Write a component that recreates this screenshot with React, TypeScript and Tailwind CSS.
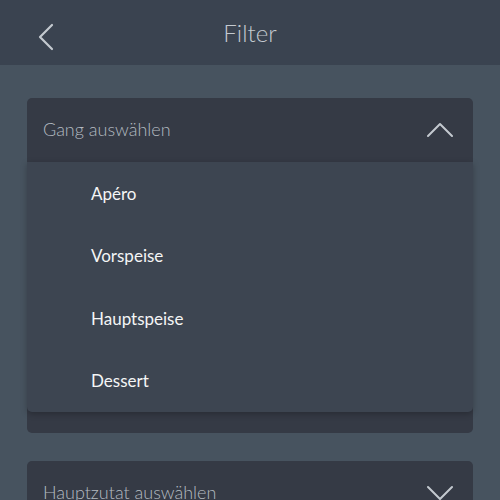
export default function App() {
  const items = ["Apéro", "Vorspeise", "Hauptspeise", "Dessert"];
  return (
    <div className="w-[500px] h-[500px] overflow-hidden bg-[#47535f]" style={{ fontFamily: "Lato, 'Noto Sans', sans-serif" }}>
      <div className="h-[65px] bg-[#3a4350] relative flex items-center justify-center">
        <svg className="absolute left-[37px] top-[23px]" width="18" height="28" viewBox="0 0 18 28" fill="none">
          <path d="M15 2 L3 14 L15 26" stroke="#c3c9cf" strokeWidth="2.2" strokeLinecap="round" strokeLinejoin="round" />
        </svg>
        <span className="text-[24px] text-[#c3c9cf] font-light">Filter</span>
      </div>
      <div className="px-[27px] pt-[33px] flex flex-col gap-[28px]">
        <div className="rounded-[5px] bg-[#353a45] relative h-[335px] shrink-0">
          <div className="h-[63px] flex items-center justify-between pl-[16px] pr-[20px]">
            <span className="text-[18px] text-[#b4bac1] font-light">Gang auswählen</span>
            <svg width="26" height="16" viewBox="0 0 26 16" fill="none">
              <path d="M1 14 L13 2 L25 14" stroke="#c3c9cf" strokeWidth="2" strokeLinecap="round" strokeLinejoin="round" />
            </svg>
          </div>
          <div className="absolute left-0 right-0 top-[64px] h-[250px] bg-[#3d4551] rounded-b-[5px] shadow-[0_2px_6px_rgba(0,0,0,0.25)] flex flex-col overflow-hidden">
            {items.map((t) => (
              <div key={t} className="h-[62.5px] shrink-0 flex items-center pl-[64px] text-[17px] text-[#f4f5f6] font-normal">{t}</div>
            ))}
          </div>
        </div>
        <div className="rounded-[5px] bg-[#353a45] h-[63px] shrink-0 flex items-center justify-between pl-[16px] pr-[20px]">
          <span className="text-[18px] text-[#b4bac1] font-light">Hauptzutat auswählen</span>
          <svg width="26" height="16" viewBox="0 0 26 16" fill="none">
            <path d="M1 2 L13 14 L25 2" stroke="#c3c9cf" strokeWidth="2" strokeLinecap="round" strokeLinejoin="round" />
          </svg>
        </div>
      </div>
    </div>
  );
}
